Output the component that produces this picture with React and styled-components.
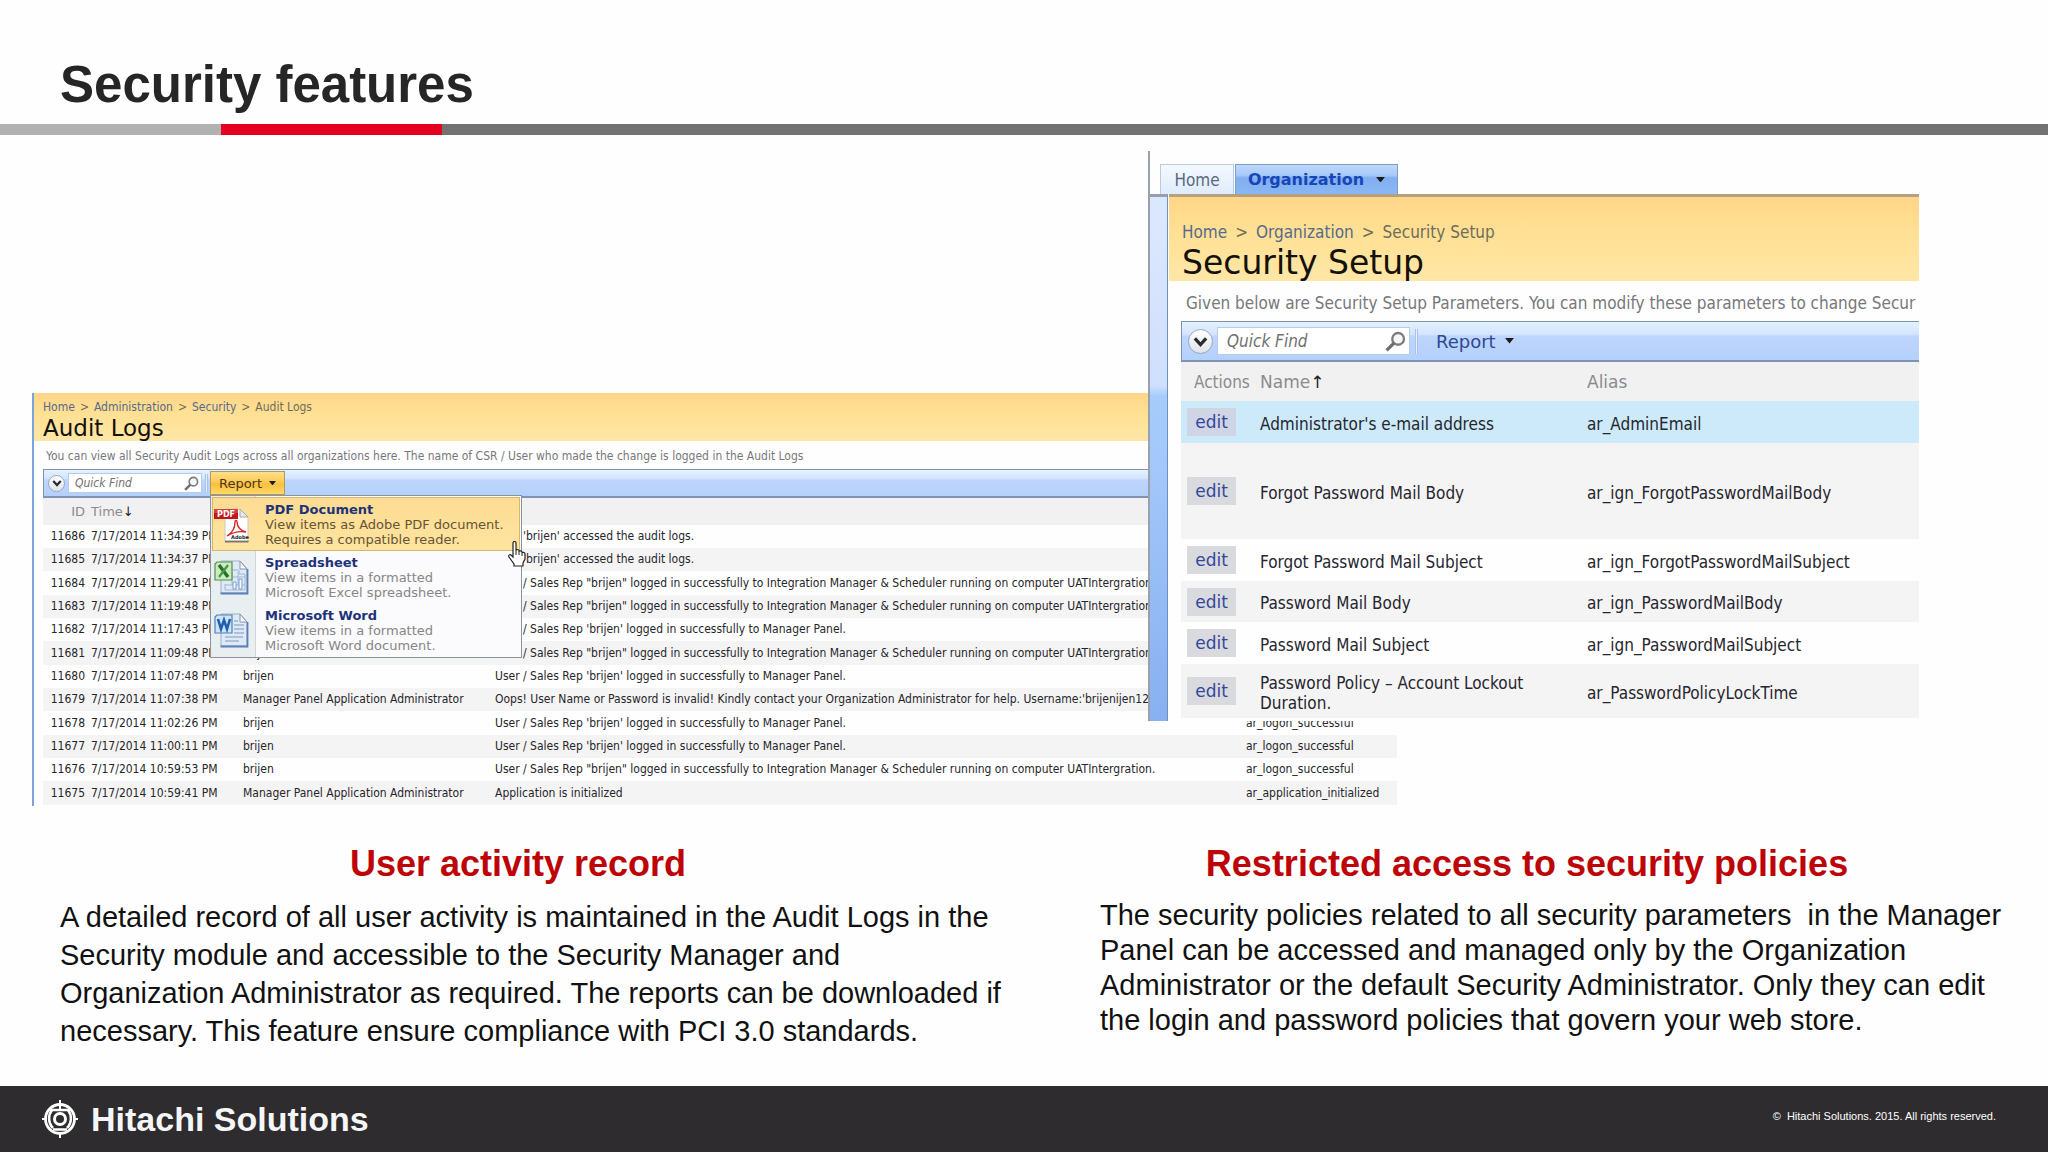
import React, { useState } from "react";
import styled, { createGlobalStyle, css } from "styled-components";

const ARIAL = `"Liberation Sans", Arial, sans-serif`;
const VERDANA = `"DejaVu Sans", Verdana, sans-serif`;
const TAHOMA = `"DejaVu Sans Condensed", Tahoma, "DejaVu Sans", sans-serif`;

const GlobalStyle = createGlobalStyle`
  * { box-sizing: border-box; }
  body { margin: 0; background: #fefefe; color: #111; font-family: ${ARIAL}; }
  a { color: inherit; text-decoration: none; }
  button { font: inherit; color: inherit; margin: 0; cursor: pointer; }
  h1, h2, p { margin: 0; }
`;

const Slide = styled.div`
  min-height: 100vh;
  display: flex;
  flex-direction: column;
`;

const Header = styled.header`
  padding: 56px 60px 10px;
`;

const SlideTitle = styled.h1`
  font-size: 51px;
  line-height: 58px;
  color: #262626;
`;

const Rule = styled.div`
  display: grid;
  grid-template-columns: 221fr 221fr 1606fr;
  height: 11px;
`;

const RulePart = styled.span`
  background: ${(p) => p.$color};
`;

const Stage = styled.main`
  display: grid;
  grid-template-columns: minmax(0, 1116fr) minmax(0, 249fr) minmax(0, 522fr);
  align-items: start;
  padding: 16px 129px 0 32px;
`;

const AuditPanel = styled.section`
  grid-area: 1 / 1 / 2 / 3;
  margin-top: 242px;
  padding-bottom: 1px;
  border-left: 2px solid #7aa5dc;
  font-family: ${TAHOMA};
  font-size: 12px;
`;

const SetupPanel = styled.section`
  grid-area: 1 / 2 / 2 / 4;
  z-index: 1;
  overflow: hidden;
  border-left: 2px solid #9ba1ab;
  background: #fefefe;
  font-family: ${TAHOMA};
  font-size: 17px;
`;

const Banner = styled.div`
  background: linear-gradient(#ffd688, #ffe195 45%, #fee6a6);
  ${(p) =>
    p.$large
      ? css`
          height: 87px;
          padding: 23px 12px 0 13px;
          border-top: 3px solid #b5a181;
        `
      : css`
          height: 48px;
          padding: 6px 9px 0;
        `}
`;

const Crumbs = styled.nav`
  display: flex;
  gap: ${(p) => (p.$large ? 8 : 5)}px;
  line-height: ${(p) => (p.$large ? 24 : 17)}px;
  color: #6f6c5c;
  a { color: #57698c; }
`;

const PanelTitle = styled.h2`
  font-family: ${VERDANA};
  font-weight: 400;
  color: #14100a;
  font-size: ${(p) => (p.$large ? 33 : 23)}px;
  line-height: ${(p) => (p.$large ? 38 : 25)}px;
`;

const Intro = styled.p`
  overflow: hidden;
  white-space: nowrap;
  color: #77787b;
  line-height: ${(p) => (p.$large ? 36 : 26)}px;
  padding-left: ${(p) => (p.$large ? 17 : 12)}px;
  padding-top: ${(p) => (p.$large ? 4 : 2)}px;
  height: ${(p) => (p.$large ? 40 : 28)}px;
`;

const Content = styled.div`
  padding-left: ${(p) => (p.$large ? 12 : 9)}px;
`;

const Toolbar = styled.div`
  display: flex;
  align-items: center;
  border: solid #7f93b3;
  border-width: 1px 0 2px 1px;
  background: linear-gradient(#e4f1ff, #d3e5fe 32%, #bfd5fd 38%, #b3d1fb);
  height: ${(p) => (p.$large ? 41 : 29)}px;
  padding-left: ${(p) => (p.$large ? 6 : 4)}px;
`;

const Round = styled.button`
  flex: none;
  display: grid;
  place-items: center;
  width: ${(p) => (p.$large ? 25 : 17)}px;
  height: ${(p) => (p.$large ? 25 : 17)}px;
  padding: 0;
  border: 1px solid #9aa9c0;
  border-radius: 50%;
  background: linear-gradient(#fff, #dfe3e8);
`;

const Search = styled.label`
  display: flex;
  align-items: center;
  border: 1px solid #b9cce6;
  background: #fff;
  margin-left: ${(p) => (p.$large ? 4 : 3)}px;
  width: ${(p) => (p.$large ? 193 : 134)}px;
  height: ${(p) => (p.$large ? 28 : 20)}px;
  padding: 0 ${(p) => (p.$large ? 3 : 2)}px 0 ${(p) => (p.$large ? 9 : 6)}px;
`;

const SearchInput = styled.input`
  flex: 1;
  min-width: 0;
  padding: 0;
  border: 0;
  outline: 0;
  background: none;
  font: inherit;
  font-style: italic;
  &::placeholder { color: #707070; opacity: 1; }
`;

const Divider = styled.span`
  width: 3px;
  border: solid #a9c3ea;
  border-width: 0 1px;
  background: #e4efff;
  height: ${(p) => (p.$large ? 25 : 18)}px;
  margin: 0 ${(p) => (p.$large ? 18 : 2)}px 0 ${(p) => (p.$large ? 5 : 3)}px;
`;

const MenuAnchor = styled.div`
  position: relative;
`;

const ReportButton = styled.button`
  display: flex;
  align-items: center;
  font-family: ${VERDANA};
  ${(p) =>
    p.$large
      ? css`
          gap: 9px;
          padding: 0;
          border: 0;
          background: none;
          color: #2b4a94;
          font-size: 18px;
        `
      : css`
          justify-content: center;
          gap: 7px;
          width: 75px;
          height: 24px;
          padding: 0;
          border: 1px solid #b09a5c;
          background: linear-gradient(#ffdf8c, #fdcb55 45%, #fbbf3c 55%, #ffd96b);
          color: #4f3418;
          font-size: 13px;
        `}
`;

const Menu = styled.div`
  position: absolute;
  top: 100%;
  left: 0;
  width: 312px;
  padding: 1px 1px 0;
  border: 1px solid #8a93a0;
  background: linear-gradient(90deg, #e9eef0 44px, #cfd6da 44px, #cfd6da 45px, #fbfafc 45px);
  font-family: ${VERDANA};
  font-size: 13px;
`;

const MenuItem = styled.button`
  display: grid;
  grid-template-columns: 42px 1fr;
  gap: 9px;
  align-items: center;
  width: 100%;
  height: ${(p) => (p.$active ? 54 : 53)}px;
  padding: 0 0 0 1px;
  border: 1px solid ${(p) => (p.$active ? "#d8b766" : "transparent")};
  background: ${(p) => (p.$active ? "linear-gradient(#fddc92, #fee4a0)" : "none")};
  color: ${(p) => (p.$active ? "#665435" : "#868686")};
  text-align: left;
  line-height: 15px;
  white-space: nowrap;
`;

const MenuName = styled.strong`
  display: block;
  color: #1d3379;
`;

const MenuLine = styled.span`
  display: block;
`;

const Pointer = styled.svg`
  position: absolute;
  top: 45px;
  left: 296px;
  width: 20px;
  height: 26px;
`;

const Table = styled.table`
  width: 100%;
  border-collapse: collapse;
  table-layout: fixed;
  white-space: nowrap;
  th, td { text-align: left; overflow: visible; }
`;

const AuditTable = styled(Table)`
  color: #26262a;
  th, td { padding: 0 3px; }
  th { height: 27px; background: #f2f1f2; color: #8b8b8d; font: 400 13px ${VERDANA}; }
  th:first-child, td:first-child { text-align: right; }
  td { height: 23px; line-height: 15px; }
  tbody tr:nth-child(3n) td { height: 24px; }
  tbody tr:nth-child(even) { background: #f5f4f5; }
`;

const SetupTable = styled(Table)`
  color: #26262e;
  th, td { padding: 0 6px; }
  th { height: 39px; background: #f2f1f2; color: #8b8b8d; font: 400 17px ${VERDANA}; }
  th:first-child { padding-left: 13px; font-family: ${TAHOMA}; }
  td { line-height: 20px; }
  td + td { padding-top: 3px; }
  td:nth-child(2) { white-space: pre-line; }
`;

const SetupRow = styled.tr`
  height: ${(p) => p.$height}px;
  background: ${(p) => p.$fill};
`;

const Sort = styled.span`
  color: #222;
`;

const EditButton = styled.button`
  display: block;
  width: 49px;
  height: 28px;
  padding: 0;
  border: 0;
  background: ${(p) => (p.$active ? "#d0d5e6" : "#d8dadd")};
  color: #34469a;
  font-family: ${VERDANA};
  line-height: 24px;
`;

const Tabs = styled.nav`
  display: flex;
  align-items: end;
  gap: 1px;
  height: 43px;
  padding-left: 10px;
`;

const Tab = styled.a`
  display: flex;
  align-items: center;
  justify-content: center;
  height: 30px;
  border: 1px solid #b8cbe4;
  border-bottom: 0;
  ${(p) =>
    p.$active
      ? css`
          gap: 12px;
          width: 163px;
          border-color: #7c9cc9;
          background: linear-gradient(#bcd8fb, #a9c9f7 35%, #80aeef 45%, #8ab8f4);
          && { color: #1746b8; }
          font: 700 16px ${VERDANA};
        `
      : css`
          width: 74px;
          background: linear-gradient(#f4f9ff, #dfecfc);
          && { color: #5b6880; }
        `}
`;

const SetupBody = styled.div`
  display: grid;
  grid-template-columns: 18px minmax(0, 1fr);
`;

const SideBand = styled.div`
  border-top: 3px solid #97a0ac;
  border-right: 1px solid #6f8fbe;
  background: linear-gradient(#dbe9ff, #cfe0fe 36%, #a5ccfb 38%, #a4c8fb 50%, #88b0f0);
`;

const SetupMain = styled.div`
  min-width: 0;
  padding: 0 0 3px 1px;
`;

const Captions = styled.section`
  display: grid;
  grid-template-columns: 1040fr 908fr;
  align-items: start;
  padding: 37px 40px 36px 60px;
`;

const Caption = styled.article`
  max-width: 948px;
  font-size: 29px;
  line-height: ${(p) => p.$leading}px;
`;

const CaptionTitle = styled.h2`
  margin-bottom: 13px;
  padding-right: ${(p) => p.$inset}px;
  color: #bd0508;
  font-size: 36px;
  line-height: 42px;
  text-align: center;
`;

const Footer = styled.footer`
  display: flex;
  align-items: center;
  justify-content: space-between;
  height: 66px;
  margin-top: auto;
  padding: 0 52px 0 42px;
  background: #2e2c2e;
  color: #fff;
`;

const Copyright = styled.small`
  padding-bottom: 6px;
  font-size: 11px;
`;

const Brand = styled.div`
  display: flex;
  align-items: center;
  gap: 13px;
  color: #f6f6f8;
  font-size: 34px;
  font-weight: 700;
`;

const Caret = ({ size = 7, color = "#1b1b1b" }) => (
  <svg width={size} height={size / 2 + 1} viewBox="0 0 8 5" aria-hidden="true">
    <path d="M0 0h8L4 5z" fill={color} />
  </svg>
);

const Chevron = ({ size }) => (
  <svg width={size} height={size} viewBox="0 0 12 12" aria-hidden="true">
    <path d="M1.5 3.5 6 8.5l4.500-5" fill="none" stroke="#2b2b33" strokeWidth="2.600" />
  </svg>
);

const Glass = ({ size }) => (
  <svg width={size} height={size} viewBox="0 0 20 20" aria-hidden="true">
    <circle cx="12.500" cy="7.500" r="5.600" fill="#f7f7f8" stroke="#7c7c80" strokeWidth="2.200" />
    <path d="M8.500 11.500 1.500 18.500" stroke="#6f6f73" strokeWidth="3.200" />
  </svg>
);

const Page = ({ children, accent = "#5b7fb8", fill = "#dfeaf7" }) => (
  <svg width="35" height="36" viewBox="0 0 35 36" aria-hidden="true">
    <path d="M7 1h19l7 8v24H7z" fill={fill} stroke="#9db0c8" strokeWidth="1" />
    <path d="M6.500 33.500h27V9" fill="none" stroke={accent} strokeWidth="1.800" />
    <path d="M26 1v8h7z" fill="#fff" stroke="#7f93b0" strokeWidth="1" />
    {children}
  </svg>
);

const PdfIcon = () => (
  <svg width="36" height="37" viewBox="0 0 36 37" aria-hidden="true">
    <path d="M11 3h15l8 8v25H11z" fill="#fdfdfd" stroke="#cfc8bc" strokeWidth="1" />
    <path d="M26 3v8h8z" fill="#e6e9ea" stroke="#aaa" strokeWidth="1" />
    <path d="M11 35.500h23.500" stroke="#7d7468" strokeWidth="1.800" />
    <path d="M0 3h24v10H0z" fill="#c0161c" />
    <path d="M0 3h24v4H0z" fill="#d8403c" />
    <text x="12" y="11" textAnchor="middle" fontFamily="DejaVu Sans" fontWeight="700" fontSize="8" fill="#fff">PDF</text>
    <path d="M13 30c5-3 8-8 8-14 0-2 2-2 2 0 0 5 4 9 9 10-6-1-13 0-19 4z" fill="none" stroke="#d4282a" strokeWidth="1.400" />
    <text x="26" y="33" textAnchor="middle" fontFamily="DejaVu Sans" fontWeight="700" fontSize="5" fill="#222">Adobe</text>
  </svg>
);

const ExcelIcon = () => (
  <Page>
    <path d="M18 10h7v4h6v16H11v-6M11 25h20M18 17h13M18 12v13M24 12v13" fill="none" stroke="#9db6d8" strokeWidth="1" />
    <path d="M19 22h3v7h-3zM25 19h3v10h-3z" fill="#f4f8fd" stroke="#7d9cc8" strokeWidth="1" />
    <path d="M3 2h15v18H1V4z" fill="#cdeac2" stroke="#4e9148" strokeWidth="1.200" />
    <path d="m5 5 9 12" stroke="#23732a" strokeWidth="3.400" />
    <path d="M14 5 5 17" stroke="#3f9a3c" strokeWidth="2.200" />
  </Page>
);

const WordIcon = () => (
  <Page>
    <path d="M20 8h4M20 12h10M20 16h10M20 20h10M11 24h18M11 28h14" stroke="#9db3d4" strokeWidth="1.300" />
    <path d="M3 2h15v18H1V4z" fill="#cfe4f8" stroke="#4c80b8" strokeWidth="1.200" />
    <path d="m4 6 3 10 3-9 3 9 3-10" fill="none" stroke="#1f5fae" strokeWidth="2.600" />
  </Page>
);

const HandPointer = () => (
  <Pointer viewBox="0 0 20 26" aria-hidden="true">
    <path
      d="M6 2c0-2 3-2 3 0v8c0-2 3-2 3 0v1c0-2 3-1 3 0v1c0-1 3-1 3 1v5l-2 4v3H7v-2L2 16c-1-2 1-3 2-2l2 2z"
      fill="#fff"
      stroke="#222"
      strokeWidth="1.200"
    />
    <path d="M9 10v4M12 11v3M15 12v3" stroke="#222" strokeWidth="1" />
  </Pointer>
);

const Emblem = () => (
  <svg width="36" height="38" viewBox="0 0 36 38" fill="none" stroke="#fff" aria-hidden="true">
    <circle cx="18" cy="19" r="14.500" strokeWidth="2.800" />
    <circle cx="18" cy="19" r="5.500" strokeWidth="3" />
    <path d="M18 0v11M18 33v5M0 19h4M32 19h4" strokeWidth="2" />
    <path d="M8 10h20M11 29.500h14" strokeWidth="2.400" />
    <path d="M10 10c-4 5-4 13 1 18M26 10c4 5 4 13-1 18" strokeWidth="2.600" />
  </svg>
);

const INTEGRATION =
  "User / Sales Rep \"brijen\" logged in successfully to Integration Manager & Scheduler running on computer UATIntergration.";
const MANAGER = "User / Sales Rep 'brijen' logged in successfully to Manager Panel.";
const APP_ADMIN = "Manager Panel Application Administrator";

const auditRows = [
  ["11686", "7/17/2014 11:34:39 PM", "brijen", "User 'brijen' accessed the audit logs.", ""],
  ["11685", "7/17/2014 11:34:37 PM", "brijen", "User 'brijen' accessed the audit logs.", ""],
  ["11684", "7/17/2014 11:29:41 PM", "brijen", INTEGRATION, ""],
  ["11683", "7/17/2014 11:19:48 PM", "brijen", INTEGRATION, ""],
  ["11682", "7/17/2014 11:17:43 PM", "brijen", MANAGER, ""],
  ["11681", "7/17/2014 11:09:48 PM", "brijen", INTEGRATION, ""],
  ["11680", "7/17/2014 11:07:48 PM", "brijen", MANAGER, ""],
  [
    "11679",
    "7/17/2014 11:07:38 PM",
    APP_ADMIN,
    "Oops! User Name or Password is invalid! Kindly contact your Organization Administrator for help. Username:'brijenijen123'",
    "",
  ],
  ["11678", "7/17/2014 11:02:26 PM", "brijen", MANAGER, "ar_logon_successful"],
  ["11677", "7/17/2014 11:00:11 PM", "brijen", MANAGER, "ar_logon_successful"],
  ["11676", "7/17/2014 10:59:53 PM", "brijen", INTEGRATION, "ar_logon_successful"],
  ["11675", "7/17/2014 10:59:41 PM", APP_ADMIN, "Application is initialized", "ar_application_initialized"],
];

const setupRows = [
  { name: "Administrator's e-mail address", alias: "ar_AdminEmail", height: 42, fill: "#cdeafb", active: true },
  { name: "Forgot Password Mail Body", alias: "ar_ign_ForgotPasswordMailBody", height: 96, fill: "#f5f4f5" },
  { name: "Forgot Password Mail Subject", alias: "ar_ign_ForgotPasswordMailSubject", height: 42, fill: "#fefefe" },
  { name: "Password Mail Body", alias: "ar_ign_PasswordMailBody", height: 41, fill: "#f5f4f5" },
  { name: "Password Mail Subject", alias: "ar_ign_PasswordMailSubject", height: 42, fill: "#fefefe" },
  { name: "Password Policy – Account Lockout\nDuration.", alias: "ar_PasswordPolicyLockTime", height: 54, fill: "#f5f4f5" },
];

const menuItems = [
  { name: "PDF Document", lines: ["View items as Adobe PDF document.", "Requires a compatible reader."], Icon: PdfIcon, active: true },
  { name: "Spreadsheet", lines: ["View items in a formatted", "Microsoft Excel spreadsheet."], Icon: ExcelIcon },
  { name: "Microsoft Word", lines: ["View items in a formatted", "Microsoft Word document."], Icon: WordIcon },
];

const QuickFind = ({ large }) => (
  <>
    <Round $large={large} aria-label="Search options">
      <Chevron size={large ? 15 : 10} />
    </Round>
    <Search $large={large}>
      <SearchInput placeholder="Quick Find" aria-label="Quick Find" />
      <Glass size={large ? 21 : 15} />
    </Search>
    <Divider $large={large} />
  </>
);

function AuditLogs() {
  const [open, setOpen] = useState(true);
  return (
    <AuditPanel>
      <Banner>
        <Crumbs>
          <a href="#home">Home</a>
          <span>&gt;</span>
          <a href="#administration">Administration</a>
          <span>&gt;</span>
          <a href="#security">Security</a>
          <span>&gt;</span>
          <span>Audit Logs</span>
        </Crumbs>
        <PanelTitle>Audit Logs</PanelTitle>
      </Banner>
      <Intro>
        You can view all Security Audit Logs across all organizations here. The name of CSR / User who made the change is
        logged in the Audit Logs
      </Intro>
      <Content>
        <Toolbar>
          <QuickFind />
          <MenuAnchor>
            <ReportButton onClick={() => setOpen(!open)} aria-expanded={open}>
              Report <Caret />
            </ReportButton>
            {open && (
              <Menu>
                {menuItems.map(({ name, lines, Icon, active }) => (
                  <MenuItem key={name} $active={active}>
                    <Icon />
                    <span>
                      <MenuName>{name}</MenuName>
                      {lines.map((line) => (
                        <MenuLine key={line}>{line}</MenuLine>
                      ))}
                    </span>
                  </MenuItem>
                ))}
                <HandPointer />
              </Menu>
            )}
          </MenuAnchor>
        </Toolbar>
        <AuditTable>
          <colgroup>
            <col width="45" />
            <col width="152" />
            <col width="252" />
            <col width="751" />
            <col />
          </colgroup>
          <thead>
            <tr>
              <th>ID</th>
              <th>
                Time<Sort>↓</Sort>
              </th>
              <th />
              <th />
              <th />
            </tr>
          </thead>
          <tbody>
            {auditRows.map((row) => (
              <tr key={row[0]}>
                {row.map((cell, i) => (
                  <td key={i}>{cell}</td>
                ))}
              </tr>
            ))}
          </tbody>
        </AuditTable>
      </Content>
    </AuditPanel>
  );
}

function SecuritySetup() {
  return (
    <SetupPanel>
      <Tabs>
        <Tab href="#home">Home</Tab>
        <Tab href="#organization" $active>
          Organization <Caret size={9} />
        </Tab>
      </Tabs>
      <SetupBody>
        <SideBand />
        <SetupMain>
          <Banner $large>
            <Crumbs $large>
              <a href="#home">Home</a>
              <span>&gt;</span>
              <a href="#organization">Organization</a>
              <span>&gt;</span>
              <span>Security Setup</span>
            </Crumbs>
            <PanelTitle $large>Security Setup</PanelTitle>
          </Banner>
          <Intro $large>
            Given below are Security Setup Parameters. You can modify these parameters to change Secur
          </Intro>
          <Content $large>
            <Toolbar $large>
              <QuickFind large />
              <ReportButton $large>
                Report <Caret size={9} />
              </ReportButton>
            </Toolbar>
            <SetupTable>
              <colgroup>
                <col width="73" />
                <col width="327" />
                <col />
              </colgroup>
              <thead>
                <tr>
                  <th>Actions</th>
                  <th>
                    Name<Sort>↑</Sort>
                  </th>
                  <th>Alias</th>
                </tr>
              </thead>
              <tbody>
                {setupRows.map((row) => (
                  <SetupRow key={row.alias} $height={row.height} $fill={row.fill}>
                    <td>
                      <EditButton $active={row.active}>edit</EditButton>
                    </td>
                    <td>{row.name}</td>
                    <td>{row.alias}</td>
                  </SetupRow>
                ))}
              </tbody>
            </SetupTable>
          </Content>
        </SetupMain>
      </SetupBody>
    </SetupPanel>
  );
}

export default function App() {
  return (
    <Slide>
      <GlobalStyle />
      <Header>
        <SlideTitle>Security features</SlideTitle>
      </Header>
      <Rule>
        <RulePart $color="#b2b2b2" />
        <RulePart $color="#e60020" />
        <RulePart $color="#727272" />
      </Rule>
      <Stage>
        <AuditLogs />
        <SecuritySetup />
      </Stage>
      <Captions>
        <Caption $leading={38}>
          <CaptionTitle $inset={32}>User activity record</CaptionTitle>
          <p>
            A detailed record of all user activity is maintained in the Audit Logs in the Security module and accessible to
            the Security Manager and Organization Administrator as required. The reports can be downloaded if necessary.
            This feature ensure compliance with PCI 3.0 standards.
          </p>
        </Caption>
        <Caption $leading={35}>
          <CaptionTitle $inset={54}>Restricted access to security policies</CaptionTitle>
          <p>
            The security policies related to all security parameters{"\u00a0 "}in the Manager Panel can be accessed and
            managed only by the Organization Administrator or the default Security Administrator. Only they can edit the
            login and password policies that govern your web store.
          </p>
        </Caption>
      </Captions>
      <Footer>
        <Brand>
          <Emblem />
          Hitachi Solutions
        </Brand>
        <Copyright>©{"\u00a0 "}Hitachi Solutions. 2015. All rights reserved.</Copyright>
      </Footer>
    </Slide>
  );
}
